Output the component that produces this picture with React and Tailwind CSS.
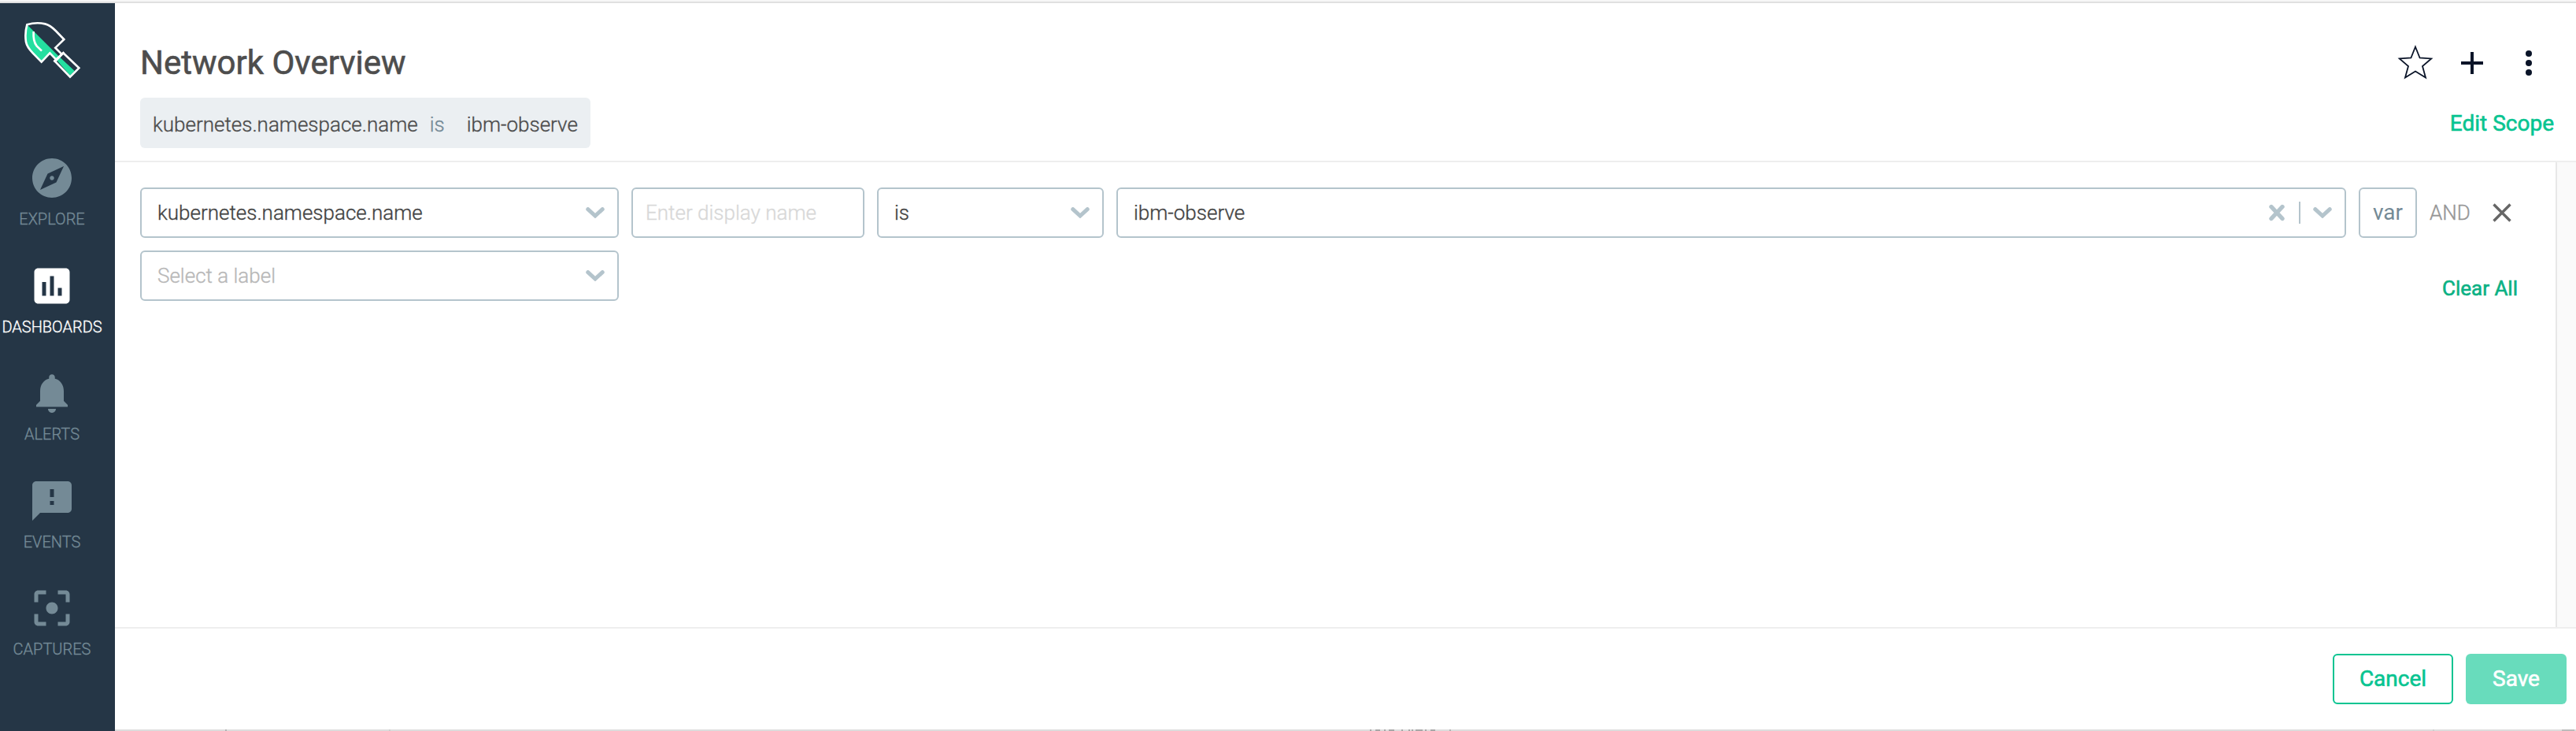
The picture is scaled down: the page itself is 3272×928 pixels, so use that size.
const NAV = [
  {
    label: "EXPLORE",
    d: "M12 10.9c-.61 0-1.1.49-1.1 1.1s.49 1.1 1.1 1.1c.61 0 1.1-.49 1.1-1.1s-.49-1.1-1.1-1.1zM12 2C6.48 2 2 6.48 2 12s4.48 10 10 10 10-4.48 10-10S17.52 2 12 2zm2.19 12.19L6 18l3.81-8.19L18 6l-3.81 8.19z",
  },
  {
    label: "DASHBOARDS",
    active: true,
    d: "M19 3H5c-1.1 0-2 .9-2 2v14c0 1.1.9 2 2 2h14c1.1 0 2-.9 2-2V5c0-1.1-.9-2-2-2zM9 17H7v-7h2v7zm4 0h-2V7h2v10zm4 0h-2v-4h2v4z",
  },
  {
    label: "ALERTS",
    d: "M12 22c1.1 0 2-.9 2-2h-4c0 1.1.89 2 2 2zm6-6v-5c0-3.07-1.64-5.64-4.5-6.32V4c0-.83-.67-1.5-1.5-1.5s-1.5.67-1.5 1.5v.68C7.63 5.36 6 7.92 6 11v5l-2 2v1h16v-1l-2-2z",
  },
  {
    label: "EVENTS",
    d: "M20 2H4c-1.1 0-1.99.9-1.99 2L2 22l4-4h14c1.1 0 2-.9 2-2V4c0-1.1-.9-2-2-2zm-7 12h-2v-2h2v2zm0-4h-2V6h2v4z",
  },
  {
    label: "CAPTURES",
    d: "M12 9c-1.66 0-3 1.34-3 3s1.34 3 3 3 3-1.34 3-3-1.34-3-3-3zm-7 6H3v4c0 1.1.9 2 2 2h4v-2H5v-4zM5 5h4V3H5c-1.1 0-2 .9-2 2v4h2V5zm14-2h-4v2h4v4h2V5c0-1.1-.9-2-2-2zm0 16h-4v2h4c1.1 0 2-.9 2-2v-4h-2v4z",
  },
];

function Logo() {
  return (
    <svg className="ml-[30px] mt-[22px] h-[75px] w-[75px]" viewBox="90 78 225 225" fill="none">
      <path d="M103 94 C97 115 96 142 101 160 C105 176 115 190 125 200 L158 236 L190 203 L216 229 L267 288 L284 270 L222 212 Z" fill="#24dfa0" />
      <g stroke="#fff" strokeWidth="8">
        <path d="M216 229 L190 202 L158 236 L125 202 C112 189 102 176 99 160 C96 140 97 115 103 94 C125 87 150 86 172 91 C188 95 200 105 212 117 L244 150 L211 182 L234 205" />
        <path d="M241 202 L301 259 L267 293 L210 234 Z" />
        <path d="M205 235 L244 199" />
        <path d="M128 120 C126 150 130 163 140 175 L159 194" />
      </g>
    </svg>
  );
}

function Chevron({ className }) {
  return (
    <svg className={className} viewBox="0 0 24 14" fill="none">
      <path d="M2.8 2.6 L12 11 L21.2 2.6" stroke="#b4c4cc" strokeWidth="5" strokeLinecap="round" />
    </svg>
  );
}

// Top edge of the dashboard underneath, visible below the footer: [x, width, colour]
const EDGE_MARKS = [
  [140, 2, "#b4b4b4"],
  [348, 2, "#cfcfcf"],
  [1594, 2, "#a8a8a8"],
  [1601, 6, "#a8a8a8"],
  [1612, 2, "#a8a8a8"],
  [1618, 7, "#a8a8a8"],
  [1634, 2, "#a8a8a8"],
  [1643, 2, "#a8a8a8"],
  [1647, 2, "#a8a8a8"],
  [1652, 9, "#a8a8a8"],
  [1664, 2, "#a8a8a8"],
  [1671, 6, "#a8a8a8"],
  [1695, 2, "#b4b4b4"],
  [2944, 2, "#cfcfcf"],
  [3108, 16, "#bcbcbc"],
];

const box = "flex h-16 shrink-0 items-center rounded-md border-2 border-[#b4c4cc] bg-white";

function Sidebar() {
  return (
    <nav className="flex w-[146px] shrink-0 flex-col bg-[#253646]">
      <Logo />
      <ul className="mt-[95px] w-[132px]">
        {NAV.map((n) => (
          <li
            key={n.label}
            className={`flex h-[136.5px] flex-col items-center ${n.active ? "text-white" : "text-[#748a96]"}`}
          >
            <svg className="h-[60px] w-[60px] shrink-0" viewBox="0 0 24 24" fill="currentColor">
              <path d={n.d} />
            </svg>
            <span className="mt-2 text-[20px] leading-7">{n.label}</span>
          </li>
        ))}
      </ul>
    </nav>
  );
}

export default function App() {
  return (
    <div className="flex h-[928px] w-[3272px] flex-col overflow-hidden bg-white font-['Roboto',sans-serif] font-light text-[#444444] [-webkit-text-stroke:0.35px]">
      <div className="h-1 shrink-0 border-b-2 border-[#e0e0e0] bg-[#f7f7f7]" />
      <div className="flex min-h-0 flex-1">
        <Sidebar />
        <main className="flex min-w-0 flex-1 flex-col">
          <header className="flex h-[202px] shrink-0 justify-between border-b-2 border-[#eeeeee] pl-8">
            <div>
              <h1 className="mt-[51px] text-[42px] leading-[50px] font-normal text-[#4d4d4d] [-webkit-text-stroke:0.6px]">
                Network Overview
              </h1>
              <div className="mt-[19px] flex h-16 w-[572px] items-center rounded-md bg-[#ebeff2] pt-[4px] pl-4 text-[26px] whitespace-nowrap text-[#4d4d4d]">
                <span>kubernetes.namespace.name</span>
                <span className="ml-[15px] text-[#748a96]">is</span>
                <span className="ml-7">ibm-observe</span>
              </div>
            </div>
            <div className="flex flex-col items-end pr-7">
              <div className="mt-[50px] mr-3 flex h-[52px] items-center text-[#0a1428]">
                <svg className="h-[46px] w-[46px]" viewBox="0 0 46 46" fill="none">
                  <path d="M23 2.5 L28.6 16.5 L43.2 17.4 L32 27 L36 41.5 L23 33.6 L10 41.5 L14 27 L2.8 17.4 L17.4 16.5 Z" stroke="currentColor" strokeWidth="1.8" />
                </svg>
                <svg className="ml-[35px] h-7 w-7" viewBox="0 0 28 28" fill="currentColor">
                  <path d="M12 0h4v12h12v4H16v12h-4V16H0v-4h12z" />
                </svg>
                <svg className="mr-4 ml-[54px] h-8 w-2" viewBox="0 0 8 32" fill="currentColor">
                  <circle cx="4" cy="4" r="4" />
                  <circle cx="4" cy="16" r="4" />
                  <circle cx="4" cy="28" r="4" />
                </svg>
              </div>
              <a className="mt-[31px] text-[28px] leading-10 font-normal text-[#08c491] [-webkit-text-stroke:0.6px]">
                Edit Scope
              </a>
            </div>
          </header>

          <div className="flex h-[590px] shrink-0">
            <section className="flex flex-1 flex-col pt-8 pl-8">
              <div className="flex items-center text-[26px]">
                <div className={`${box} w-[608px] justify-between pr-[16px] pl-[20px]`}>
                  <span>kubernetes.namespace.name</span>
                  <Chevron className="h-[14px] w-6" />
                </div>
                <div className={`${box} ml-4 w-[296px] pl-4 text-[#d8d8d8]`}>Enter display name</div>
                <div className={`${box} ml-4 w-[288px] justify-between pr-[16px] pl-[20px]`}>
                  <span>is</span>
                  <Chevron className="h-[14px] w-6" />
                </div>
                <div className={`${box} ml-4 w-[1562px] pr-[16px] pl-[20px]`}>
                  <span className="flex-1">ibm-observe</span>
                  <svg className="h-[22px] w-5" viewBox="0 0 20 22" fill="none">
                    <path d="M3 3.5 L17 18.5 M17 3.5 L3 18.5" stroke="#b4c4cc" strokeWidth="5.4" strokeLinecap="round" />
                  </svg>
                  <span className="ml-[18px] h-7 w-[2px] bg-[#b4c4cc]" />
                  <Chevron className="ml-4 h-[14px] w-6" />
                </div>
                <div className={`${box} ml-4 w-[74px] justify-center text-[28px] font-normal text-[#748a96] [-webkit-text-stroke:0px]`}>
                  var
                </div>
                <div className="ml-4 w-20 text-[26px] text-[#969696]">AND</div>
                <svg className="h-6 w-6" viewBox="0 0 24 24" fill="none">
                  <path d="M1.5 1.5 L22.5 22.5 M22.5 1.5 L1.5 22.5" stroke="#666666" strokeWidth="3.4" />
                </svg>
              </div>
              <div className="mt-4 flex justify-between">
                <div className={`${box} w-[608px] justify-between pr-[16px] pl-[20px] text-[26px] text-[#b8b8b8]`}>
                  <span>Select a label</span>
                  <Chevron className="h-[14px] w-6" />
                </div>
                <a className="mt-7 mr-12 text-[26px] leading-10 font-normal text-[#0bb184] [-webkit-text-stroke:0.6px]">
                  Clear All
                </a>
              </div>
            </section>
            <aside className="w-[26px] shrink-0 border-l-2 border-[#e8e8e8] bg-[#fafafa]" />
          </div>

          <footer className="flex flex-1 justify-end gap-4 border-t-2 border-[#eeeeee] pt-8 pr-3 text-[28px] font-normal [-webkit-text-stroke:0.6px]">
            <button className="h-16 w-[153px] rounded-md border-2 border-[#08c491] text-[#08c491]">Cancel</button>
            <button className="h-16 w-32 rounded-md bg-[#68dcbc] text-white">Save</button>
          </footer>
          <svg className="h-[2px] w-[3126px] shrink-0 bg-[#dddddd]" viewBox="0 0 3126 2">
            {EDGE_MARKS.map(([x, w, c]) => (
              <rect key={x} x={x} y="0" width={w} height="2" fill={c} />
            ))}
          </svg>
        </main>
      </div>
    </div>
  );
}
